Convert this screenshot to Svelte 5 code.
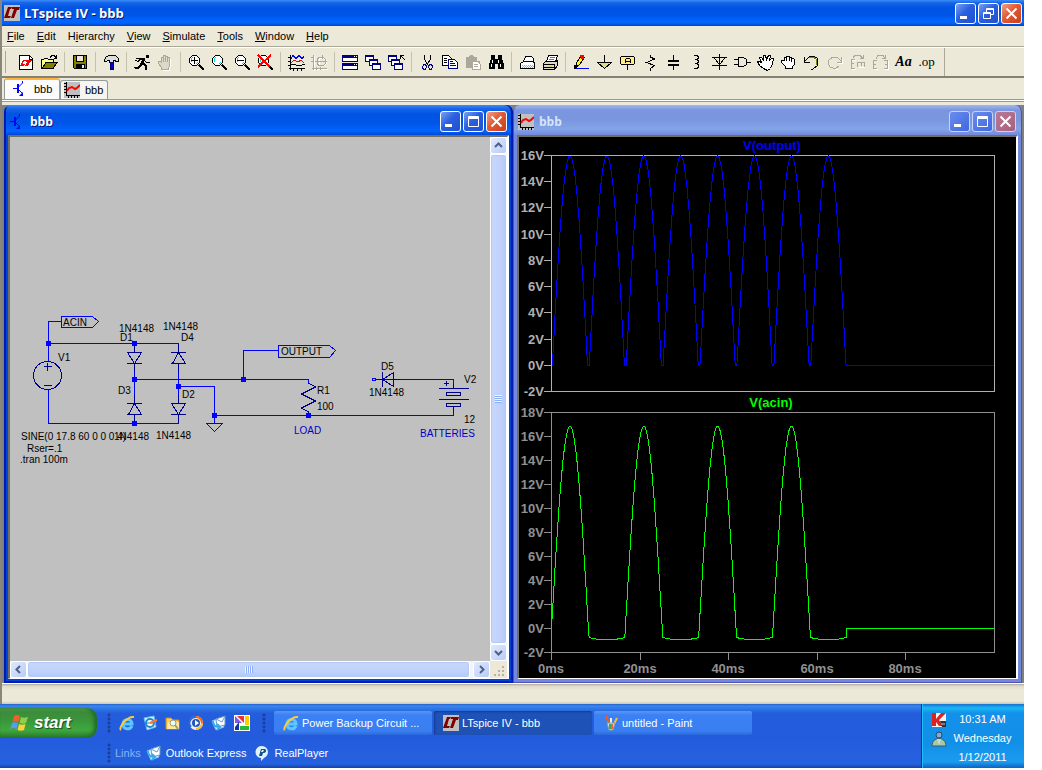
<script lang="ts">

    const menus = ['File', 'Edit', 'Hierarchy', 'View', 'Simulate', 'Tools', 'Window', 'Help'];
    // index of the underlined access key in each menu name
    const keys = [0, 0, 1, 0, 0, 0, 0, 0];

    const logo = '<path fill="#c0c0c0" d="M0 0h16v16H0z"/><path fill="#800000" d="M4 2h4L7 4H6l-2 7h3l-1 2H0zM8 2h8l-1 3h-2l-3 8H7l3-9H8z"/>';
    const transistor = '<path stroke="#00f" fill="none" d="M1 7.5h5M10.5 0v2l-4 4M6.5 8.5l4 4"/><path stroke="#00f" fill="none" stroke-width="2" d="M6 3v9"/><path fill="#00f" d="M11 11v4H7z"/>';
    const chart = '<path fill="#c0c0c0" d="M0 0h16v16H0z"/><path stroke="#000" fill="none" d="M2.5 0v14M2 13.5h14M0 1.5h2M0 4.5h2M0 7.5h2M0 10.5h2M4.5 14v2M7.5 14v2M10.5 14v2M13.5 14v2"/><path stroke="red" stroke-width="2" fill="none" d="M3 9l2-3 3-1 3 2 2-1 3-3"/>';
    const glass = '<path stroke="#000" fill="#fff" d="M4.5 1.5h4l3 3v4l-3 3h-4l-3-3v-4z"/><path stroke="#000" stroke-width="2" d="M11 11l5 5"/><path stroke="#0dd" d="M3 7.5V5L5 3M8 10l2-2"/>';
    const hand = 'M4.5 15.5v-2l-3-4v-2h2l1 1v-5h2v4-6h2v6-5h2v5-4h2v8l-1 4z';
    const win = (x: number, y: number) => `<path fill="#fff" stroke="#000080" d="M${x}.5 ${y}.5h8v6h-8z"/><path stroke="#000080" stroke-width="2" d="M${x} ${y + 1}h9"/>`;

    const icons: Record<string, string> = {
        'New schematic': '<path fill="#fff" stroke="#000" d="M1.5 1.5h10l3 3v11h-13z"/><path fill="none" stroke="#000" d="M11.5 2v3h3"/><path fill="red" d="M5 6h3L7 7H6l-1 3h2l-1 2H2zM8 6h6l-1 2h-1l-2 4H7l2-4H8z"/>',
        'Open': '<path fill="#ff8" stroke="#000" d="M.5 14.5v-9h2l1-1h3l1 1h5v3"/><path fill="#808000" stroke="#000" d="M1 14.5l4-6h11l-4 6z"/><path stroke="#000" fill="none" d="M9 3.5l2-2h2l2 2M15.5 1v3M12.5 4h3"/>',
        'Save': '<path fill="#808000" stroke="#000" d="M1.5 1.5h13v13h-12l-1-1z"/><path fill="#ece9d8" stroke="#000" d="M4.5 1.5h7v6h-7z"/><path fill="#000" d="M4 10h9v5H4z"/><path fill="#ece9d8" d="M10 11h2v3h-2z"/>',
        'Control panel': '<path fill="#ddd" stroke="#000" d="M1.5 5.5l2-3 3-1h6l3 3v3h-2l-2-1h-1v2h-4v-2h-2l-1 1h-2z"/><path fill="#00c" stroke="#000080" d="M7.5 8.5h3v7h-3z"/>',
        'Run': '<path fill="#000" d="M12 1h3v3h-3zM7 4h4v2l-2 4H6l2-4H6L4 8H2z"/><path stroke="#000" fill="none" d="M10 5.5l2 2.5h4M7 9.5l4 2v4M7 10l-3 3.5H0M9 9l3 2v5M1 14.5h3l4-4"/><path stroke="#000" d="M2 4.5h4M1 6.5h2"/>',
        'Halt': `<path fill="#fff" transform="translate(1 1)" d="${hand}"/><path fill="#ddd9c8" stroke="#aca899" d="${hand}"/>`,
        'Zoom in': glass + '<path stroke="#000" d="M3 6.5h7M6.5 3v7"/>',
        'Pan': glass,
        'Zoom out': glass + '<path stroke="#000" d="M3 6.5h7"/>',
        'Zoom full': glass + '<path stroke="red" stroke-width="2" d="M1 1l12 12M14 1L1 13"/>',
        'Autorange': '<path stroke="#000" fill="none" d="M2.5 1v15M1 14.5h16M0 3.5h2M0 7.5h2M0 11.5h2M5.5 14v3M9.5 14v3M13.5 14v3M3 10.5h4l2 1h4l2-1h2"/><path stroke="#00f" fill="none" d="M3 4.5l2-3 3 3 3-3 3 3 2-2"/><path stroke="red" fill="none" d="M3 8.5l3-2 4 1 3-1 3 2"/>',
        'Pick traces': '<path stroke="#fff" fill="none" d="M3.5 2v15M2 15.5h15M8 4.5h5l2 2v3l-2 2H8z"/><path stroke="#aca899" fill="none" d="M2.5 1v15M1 14.5h15M0 3.5h2M0 7.5h2M5.5 13v3M9.5 13v3M7.5 3.5h5l2 2v4l-2 2h-5l-1-2v-4zM11.5 1v4M4 7.5h12"/>',
        'Tile': '<path fill="#fff" stroke="#000080" d="M.5 1.5h15v6H.5zM.5 9.5h15v6H.5z"/><path stroke="#000080" stroke-width="3" d="M0 2.5h16M0 10.5h16"/><path stroke="#fff" d="M12 2.5h1M14 2.5h1M12 10.5h1M14 10.5h1"/>',
        'Cascade': win(0, 1) + win(4, 5) + win(7, 9),
        'Close windows': win(0, 1) + win(3, 5) + win(6, 9) + '<path stroke="#000" fill="none" d="M12.5 5V1.5H16M13 2l4 4"/>',
        'Cut': '<path stroke="#000" fill="none" d="M5.5 1v4l4 7M11.5 1v4l-4 7"/><path stroke="#008" fill="none" d="M4.5 10.5h2l1 2-1 3h-2l-1-2zM10.5 10.5h2l1 2-1 3h-2l-1-3z"/>',
        'Copy': '<path fill="#fff" stroke="#000" d="M.5 1.5h6l3 3v7h-9z"/><path fill="#fff" stroke="#008" d="M6.5 5.5h6l3 3v6h-9z"/><path stroke="#008" d="M8 9.5h5M8 11.5h6M8 7.5h3"/><path stroke="#000" d="M2 4.5h3M2 6.5h3M2 8.5h3"/>',
        'Paste': '<path fill="#aca899" d="M1 3h3l1-2h3l1 2h3v4h3v8H7v-1H1z"/><path fill="#fff" stroke="#aca899" d="M7.5 7.5h5l3 3v5h-8z"/><path stroke="#aca899" d="M9 10.5h4M9 12.5h4"/>',
        'Find': '<path fill="#000" d="M3 1h4v4h3V1h4v4l2 5v5h-6v-5H7v5H1v-5l2-5z"/><path stroke="#fff" d="M4.5 6v3M3.5 10v3M10.5 6v3M12.5 10v3"/>',
        'Print': '<path stroke="#000" fill="#fff" d="M4.5 7.5l2-5h6l2 2v3z"/><path stroke="#000" fill="#fff" d="M1.5 9.5l3-2h10l1 2v5h-14z"/><path stroke="#aaa" stroke-dasharray="1 1" d="M3 11.5h11M4 12.5h11M3 13.5h11"/>',
        'Print preview': '<path stroke="#000" fill="#fff" d="M4.5 7.5l2-6h9l-2 6z"/><path stroke="#777" d="M8 3.5h5M7 5.5h5"/><path stroke="#000" fill="#ddd9c8" d="M1.5 9.5l2-2h10l2-1v5l-3 4h-11z"/><path stroke="#000" d="M2 10.5h10M12.5 10v5M2 13.5h10"/><path stroke="#dd0" d="M7 12h3"/>',
        'Wire': '<path fill="#ff0" stroke="#000" d="M8.5 1.5l-5 7-1 5 4-3 5-7z"/><path fill="red" d="M7 1h4v4H8z"/><path fill="#000" d="M1 11h3v4H1z"/><path stroke="#00f" d="M3 14.5h13"/>',
        'Ground': '<path fill="#dd8" stroke="#000" d="M1.5 8.5h14l-7 6z"/><path stroke="#000" d="M8.5 1v8"/>',
        'Label net': '<path fill="#fe8" stroke="#000" d="M2.5 2.5h12l1 1v6l-1 1h-12l-1-1v-6zM8.5 11v5"/><path stroke="#000" fill="none" d="M6.5 9V5.5l1-1h3l1 1V9M7 7.5h4"/>',
        'Resistor': '<path stroke="#000" fill="none" d="M8.5 1v2l4 2-8 3.5 8 3-4 3v2"/>',
        'Capacitor': '<path stroke="#000" fill="none" d="M8.5 1v6M8.5 11v5"/><path stroke="#000" stroke-width="2" d="M3 7h11M3 11h11"/>',
        'Inductor': '<path stroke="#000" fill="none" d="M6 1.5h3l1 1v2l-1 1H7h2l1 1v2l-1 1H7h2l1 1v3l-1 1H6"/>',
        'Diode': '<path stroke="#000" fill="none" d="M8.5 0v16M1 3.5h15M3.5 4l5 7 5-7M1 11.5h15"/>',
        'Component': '<path stroke="#000" fill="none" d="M4.5 3.5h5l3 2v5l-3 2h-5zM0 5.5h4M0 10.5h4M13 8.5h4"/>',
        'Move': '<path stroke="#000" fill="#fff" d="M6.5 14.5l-4-3-2-4h2l2 1-2-5h2l2 3V1.5h2l1 4 2-4h2l-1 5 2-2h2l-1 5-2 5-3 2z"/>',
        'Drag': '<path stroke="#000" fill="#fff" d="M5.5 14.5v-2l-4-4v-2h3v-3h2v-1h3v1h2v1h2l1 1v5l-2 2v2zM6.5 4v3M9.5 4v3M11.5 5v3"/>',
        'Undo': '<path stroke="#000" fill="none" d="M1.5 3v5h5M2 7l4-4 4-1 4 2 1 4-1 4-4 3H8"/><path stroke="#880" fill="none" d="M6 4l4-1 3 2 1 3-1 3"/>',
        'Redo': '<path stroke="#fff" fill="none" d="M16.5 5v4h-5M9 15.5h3"/><path stroke="#aca899" fill="none" d="M15.5 3v5h-5M15 7l-4-4H7L3 6l-1 3 2 4 3 1h3l3-2"/>',
        'Rotate': '<path stroke="#fff" fill="none" d="M3 6.5h4M3 15.5h4M10 13.5h6"/><path stroke="#aca899" fill="none" d="M2.5 5v9M2 5.5h4M2 9.5h3M2 14.5h4M8 8.5h8M8.5 9v4M12.5 9v3M15.5 9v4M4 3.5l2-2h5l3 3M14.5 1v4M11 4.5h4"/>',
        'Mirror': '<path stroke="#fff" fill="none" d="M2 15.5h4M12 15.5h4M16.5 7v9"/><path stroke="#aca899" fill="none" d="M1.5 6v9M1 6.5h4M1 10.5h3M1 14.5h4M15.5 6v9M12 6.5h4M13 10.5h3M12 14.5h4M4 4.5l2-3h5l2 3M13.5 1v4M10 4.5h4"/>'
    };

    const groups = [
        ['New schematic', 'Open'],
        ['Save'],
        ['Control panel'],
        ['Run', 'Halt'],
        ['Zoom in', 'Pan', 'Zoom out', 'Zoom full'],
        ['Autorange', 'Pick traces'],
        ['Tile', 'Cascade', 'Close windows'],
        ['Cut', 'Copy', 'Paste', 'Find'],
        ['Print', 'Print preview'],
        ['Wire', 'Ground', 'Label net', 'Resistor', 'Capacitor', 'Inductor', 'Diode', 'Component', 'Move', 'Drag', 'Undo', 'Redo', 'Rotate', 'Mirror']
    ];

    const ie = '<path fill="none" stroke="#5cc8ff" stroke-width="3" d="M4 9h9c0-6-9-6-9 0s7 6 9 2"/><path fill="none" stroke="#fc3" stroke-width="2" d="M2 15C-1 13 8 1 15 2"/>';
    const envelope = '<path fill="#e8f4ff" stroke="#7bc4f4" d="M1 6l8-3 4 9-8 3z"/><path fill="#fff" stroke="#69c" d="M5 4l9-3v9l-8 2z"/><path fill="none" stroke="#69c" d="M5 4l6 3 3-6"/><path fill="none" stroke="#35a8f0" stroke-width="2" d="M2 6c0 4 2 6 6 6M6 9l3 3-3 3"/>';
    const bubble = '<path fill="#dff3ff" d="M8 1a6 6 0 0 1 6 6c0 3-2 5-4 6l-3 3v-3A6 6 0 0 1 8 1z"/><path fill="#158" d="M5 11l2-7h4c2 1 1 4-1 4H9l-1 3zM8 5l-1 2h2l1-2z"/>';
    const quick = [
        { name: 'Internet Explorer', art: ie },
        { name: 'Show Desktop', art: '<path fill="#d8f0ff" stroke="#5bc0f4" d="M2 3l10-2 2 11-9 3z"/><circle cx="8" cy="8" r="4" fill="#fff" stroke="#28c" stroke-width="2"/><path stroke="#28c" d="M5 8h6"/><path stroke="#f72" stroke-width="2" d="M8 8l7-3"/>' },
        { name: 'Explorer', art: '<path fill="#fc5" stroke="#c82" d="M1 3h5l2 2h6v9H1z"/><path fill="#ffe9a0" d="M3 7h11v7H2z"/><circle cx="8" cy="8" r="3" fill="#dff" stroke="#a96"/><path stroke="#a96" stroke-width="2" d="M10 10l3 4"/>' },
        { name: 'Media Player', art: '<circle cx="8" cy="8" r="7" fill="#e8eef8"/><path fill="none" stroke="#f60" stroke-width="2" d="M8 2a6 6 0 0 1 6 6"/><path fill="none" stroke="#36c" stroke-width="2" d="M3 12A6 6 0 0 1 8 2"/><path fill="none" stroke="#fb2" stroke-width="2" d="M8 14a6 6 0 0 0 6-6"/><circle cx="8" cy="8" r="4" fill="#25b"/><path fill="#fff" d="M7 5l4 3-4 3z"/>' },
        { name: 'Outlook Express', art: envelope },
        { name: 'Picture viewer', art: '<path fill="#fff" d="M0 0h16v16H0z"/><path fill="#85d" d="M1 1l7 7H1z"/><path fill="#e33" d="M3 1h7v7z"/><path fill="#fc0" d="M11 1h4v9h-4z"/><path fill="#2b3" d="M6 11h9v4H6z"/><path fill="#13a" d="M1 12l4-5v8H1z"/>' }
    ];
    const brushes = '<path stroke="#f52" stroke-width="2" d="M3 1l4 9"/><path stroke="#eee" stroke-width="2" d="M8 3v8"/><path stroke="#fb3" stroke-width="2" d="M14 3l-4 8"/><path stroke="#4a4" stroke-width="2" d="M4 6l3 6"/><path fill="#cde" stroke="#89a" d="M4 8h8l-2 7H6z"/><path stroke="#3a5" stroke-width="2" d="M7 9v5"/><path stroke="#e63" stroke-width="2" d="M9 9v5"/>';
    const tasks = [
        { title: 'Power Backup Circuit ...', art: ie },
        { title: 'LTspice IV - bbb', art: logo, active: true },
        { title: 'untitled - Paint', art: brushes }
    ];

    // plot geometry
    const x0 = 551;
    const x1 = 994;
    const perMs = (x1 - x0) / 100;
    const stop = 66.7;

    function trace(zero: number, perVolt: number, fn: (s: number) => number) {
        const pts: string[] = [];
        for (let t = 0; t <= stop; t += 0.1) {
            const s = Math.sin(2 * Math.PI * 60 * t / 1000);
            pts.push(`${(x0 + 0.5 + t * perMs).toFixed(1)},${(zero + 0.5 - fn(s) * perVolt).toFixed(1)}`);
        }
        pts.push(`${x0 + Math.round(stop * perMs)}.5,${zero}.5`, `${x1},${zero}.5`);
        return pts.join(' ');
    }

    const output = trace(365, 13.1, s => Math.max(0, 17.3 * Math.abs(s) - 1.3));
    const acin = trace(628, 12, s => s >= 0 ? 16.85 * s : Math.max(17.8 * s, 0.2 * s - 0.75));

    const upper = Array.from({ length: 10 }, (_, i) => ({ v: 16 - 2 * i, y: Math.round(155 + i * 26.22) }));
    const lower = Array.from({ length: 11 }, (_, i) => ({ v: 18 - 2 * i, y: 412 + i * 24 }));
    const times = [0, 20, 40, 60, 80];

    const nodes = [[48, 343], [134, 343], [134, 379], [178, 386], [134, 423], [214, 415], [243, 379], [308, 415]];
    const labels: [number, number, string][] = [
        [63, 326, 'ACIN'], [58, 361, 'V1'], [119, 332, '1N4148'], [120, 341, 'D1'], [163, 330, '1N4148'],
        [181, 341, 'D4'], [118, 394, 'D3'], [182, 398, 'D2'], [21, 440, 'SINE(0 17.8 60 0 0 0 4)'],
        [114, 440, '1N4148'], [156, 439, '1N4148'], [27, 452, 'Rser=.1'], [20, 463, '.tran 100m'],
        [281, 355, 'OUTPUT'], [317, 394, 'R1'], [317, 410, '100'], [381, 370, 'D5'], [369, 396, '1N4148'],
        [464, 383, 'V2'], [464, 423, '12']
    ];

</script>

{#snippet icon(art: string)}
    <svg class="icon" viewBox="0 0 16 16" width="16" height="16" aria-hidden="true">{@html art}</svg>
{/snippet}

{#snippet captions(restore: boolean)}
    <div class="captions">
        <button aria-label="Minimize"><svg width="19" height="19"><path fill="#fff" d="M4 12h7v3H4z" /></svg></button>
        <button aria-label="Maximize">
            <svg width="19" height="19">
                {#if restore}
                    <path fill="none" stroke="#fff" d="M7.5 8V4.5h7v6H12M7 5.5h8M4.5 8.5h7v6h-7zM4 9.5h8" />
                {:else}
                    <path fill="none" stroke="#fff" d="M4.5 4.5h10v10h-10zM4 5.5h11M4 6.5h11" />
                {/if}
            </svg>
        </button>
        <button class="close" aria-label="Close"><svg width="19" height="19"><path stroke="#fff" stroke-width="2" d="M4.5 4.5l10 10M14.5 4.5l-10 10" /></svg></button>
    </div>
{/snippet}

{#snippet diode(x: number, y: number, up: boolean)}
    <g class="part" transform="translate({x} {y})">
        {#if up}
            <path d="M.5 -8v8M.5 11v9M-7 .5h15M-7 11.5h15M.5 .5l-6 11M.5 .5l7 11" />
        {:else}
            <path d="M.5 -8v8M.5 11v9M-7 .5h15M-7 11.5h15M-6.5 .5l7 11 7-11" />
        {/if}
    </g>
{/snippet}

<div class="desktop">
    <div class="app">
        <header class="title">
            {@render icon(logo)}
            <h1>LTspice IV - bbb</h1>
            {@render captions(true)}
        </header>

        <nav class="menu">
            {#each menus as name, i}
                <button>{name.slice(0, keys[i])}<u>{name[keys[i]]}</u>{name.slice(keys[i] + 1)}</button>
            {/each}
        </nav>

        <div class="toolbar">
            <span class="grip"></span>
            {#each groups as group, g}
                {#if g}<i></i>{/if}
                {#each group as name}
                    <button aria-label={name}>
                        <svg viewBox="0 0 17 17" width="17" height="17" shape-rendering="crispEdges">{@html icons[name]}</svg>
                    </button>
                {/each}
            {/each}
            <button class="aa" aria-label="Text">Aa</button>
            <button class="op" aria-label="SPICE directive">.op</button>
            <i class="end"></i>
        </div>

        <div class="tabs">
            <button class="active">{@render icon(transistor)}bbb</button>
            <button>{@render icon(chart)}bbb</button>
        </div>

        <main>
            <section class="window">
                <header>
                    {@render icon(transistor)}
                    <h2>bbb</h2>
                    {@render captions(false)}
                </header>
                <div class="client schematic">
                    <div class="sheet">
                        <svg viewBox="10 137 480 524" width="480" height="524" shape-rendering="crispEdges">
                            <path class="wire" d="M61 321.5H48.5V361M48.5 343.5h130v8M48.5 390v33.5h130v-6M134.5 343v8M134.5 371v28M134.5 419v4M134.5 379.5h174v4M178.5 371v28M178.5 386.5h36v37M243.5 379v-28.5H279M214.5 415.5h239v-8M400 379.5h53.5v5" />
                            <path class="wire" d="M61.5 316.5h31l6 5-6 6h-31zM278.5 345.5h51l6 5-6 7h-51zM206.5 423.5h16l-8 8z" />
                            <g class="part">
                                <circle cx="47.5" cy="375.5" r="14" />
                                <path d="M44 366.5h8M47.5 363v8M44 385.5h8" />
                                <path d="M308.5 383l7 4-14 7 14 7-14 7 7 4v3" />
                                <path d="M376 379.5h24M382.5 372v15M393.5 372v15M382.5 379.5l11-7M382.5 379.5l11 7" />
                                <path d="M439 388.5h30M439 399.5h30M446.5 392.5h14v3h-14zM446.5 403.5h14v3h-14zM453.5 384v4M453.5 407v5M444 383.5h5M446.5 381v5" />
                            </g>
                            {@render diode(134, 352, false)}
                            {@render diode(178, 352, true)}
                            {@render diode(134, 403, true)}
                            {@render diode(178, 403, false)}
                            {#each nodes as [x, y]}
                                <rect class="node" x={x - 2} y={y - 2} width="5" height="5" />
                            {/each}
                            <rect class="wire" x="372.5" y="378.5" width="3" height="2" />
                            {#each labels as [x, y, text]}
                                <text {x} {y}>{text}</text>
                            {/each}
                            <text class="note" x="294" y="434">LOAD</text>
                            <text class="note" x="420" y="437">BATTERIES</text>
                        </svg>
                    </div>
                    <div class="scroll vertical">
                        <button aria-label="Scroll up"><svg width="15" height="15"><path d="M4 9l3.500-3.500L11 9" /></svg></button>
                        <div class="thumb"><span></span></div>
                        <button aria-label="Scroll down"><svg width="15" height="15"><path d="M4 6l3.500 3.500L11 6" /></svg></button>
                    </div>
                    <div class="scroll horizontal">
                        <button aria-label="Scroll left"><svg width="15" height="15"><path d="M9 4L5.500 7.500 9 11" /></svg></button>
                        <div class="thumb"><span></span></div>
                        <button aria-label="Scroll right"><svg width="15" height="15"><path d="M6 4l3.500 3.500L6 11" /></svg></button>
                    </div>
                    <svg width="17" height="17"><path stroke="#b8b4a2" stroke-width="2" stroke-dasharray="2 2" d="M4 14h10M8 10h6M12 6h2" /></svg>
                </div>
            </section>

            <section class="window inactive">
                <header>
                    {@render icon(chart)}
                    <h2>bbb</h2>
                    {@render captions(false)}
                </header>
                <div class="client">
                    <svg class="plot" viewBox="519 137 497 541" preserveAspectRatio="xMidYMin meet" shape-rendering="crispEdges">
                        <g class="axis light">
                            <rect x={x0 + 0.5} y="155.5" width={x1 - x0} height="236" />
                            {#each upper as { v, y }}
                                <path d="M544 {y}.5h7" />
                                <text x="544" y={y + 5} text-anchor="end">{v}V</text>
                            {/each}
                        </g>
                        <g class="axis">
                            <rect x={x0 + 0.5} y="412.5" width={x1 - x0} height="240" />
                            {#each lower as { v, y }}
                                <path d="M544 {y}.5h7" />
                                <text x="544" y={y + 5} text-anchor="end">{v}V</text>
                            {/each}
                            {#each times as t}
                                <path d="M{Math.round(x0 + t * perMs)}.5 653v7" />
                                <text x={Math.round(x0 + t * perMs)} y="673" text-anchor="middle">{t}ms</text>
                            {/each}
                        </g>
                        <polyline points={output} stroke="#0000ff" />
                        <polyline points={acin} stroke="#00ff00" />
                        <text x="772" y="150" text-anchor="middle" fill="#0000ff">V(output)</text>
                        <text x="771" y="407" text-anchor="middle" fill="#00ff00">V(acin)</text>
                    </svg>
                </div>
            </section>
        </main>

        <footer class="status"></footer>
    </div>

    <div class="taskbar">
        <div class="bands">
            <div class="band">
                <button class="start">
                    <svg width="20" height="18" viewBox="0 0 20 18">
                        <path fill="#f0612a" d="M4 2c2-1.500 4-1.500 6 0L8.500 8c-2-1-4-1-6 0z" />
                        <path fill="#8cd04a" d="M11 3c2 1 4 1 7 0l-2 6c-2 1-4 1-6.500 0z" />
                        <path fill="#5a9af0" d="M2 9c2-1 4-1 6 0l-1.500 6c-2-1.500-4-1.500-6 0z" />
                        <path fill="#fbd23c" d="M9 10c2 1 4 1 6.500 0l-1.500 6c-2.500 1-4.500 1-6.500 0z" />
                    </svg>
                    start
                </button>
                <span class="dots"></span>
                <div class="quick">
                    {#each quick as item}
                        <button aria-label={item.name}>{@render icon(item.art)}</button>
                    {/each}
                </div>
                <span class="dots"></span>
                <div class="tasks">
                    {#each tasks as task}
                        <button class:active={task.active}>{@render icon(task.art)}{task.title}</button>
                    {/each}
                </div>
            </div>
            <div class="band links">
                <span class="dots"></span>
                <span class="name">Links</span>
                <a href="#outlook">{@render icon(envelope)}Outlook Express</a>
                <a href="#realplayer">{@render icon(bubble)}RealPlayer</a>
            </div>
        </div>
        <div class="tray">
            <div class="trayicons">
                {@render icon('<path fill="#f4f4f4" d="M1 1h14v14H1z"/><path fill="#d22" d="M1 1h4v6l5-6h5L8 8l4 6H8L5 10v4H1z"/><path fill="#333" d="M9 9h6v6h-4z"/><path stroke="#ccc" d="M10 12h4"/>')}
                {@render icon('<circle cx="8" cy="4" r="3" fill="#79aede" stroke="#345"/><path fill="#a8c8a0" stroke="#456" d="M1 15c0-10 14-10 14 0z"/><path fill="#bde" d="M6 8h4l-2 6z"/>')}
            </div>
            <div class="clock">
                <span>10:31 AM</span>
                <span>Wednesday</span>
                <span>1/12/2011</span>
            </div>
        </div>
    </div>
</div>

<style>

    :global(body) {
        margin: 0;
        background: white;
    }

    .desktop {
        display: flex;
        flex-direction: column;
        box-sizing: border-box;
        min-height: calc(100vh - 2px);
        margin: 0 18px 2px 0;

        font: 11px/14px "Liberation Sans", Arial, sans-serif;
        color: black;
    }

    .desktop :is(button, a) {
        box-sizing: border-box;
        border: none;
        background: none;
        font: inherit;
        color: inherit;
        text-decoration: none;
    }

    button {
        padding: 0;
    }

    svg {
        display: block;
        flex: none;
    }

    h1, h2 {
        flex: 1;
        margin: 0;

        font: bold 12px/16px "Open Sans", sans-serif;
        color: white;
        text-shadow: 1px 1px #0a1883;
    }

    h1 {
        font-size: 13px;
    }

    .app {
        flex: 1;
        display: flex;
        flex-direction: column;
        border-left: 2px solid #8a877a;
        background: #ece9d8;
    }

    .title {
        display: flex;
        align-items: center;
        gap: 4px;
        height: 26px;
        box-sizing: border-box;
        padding: 0 2px;

        background: linear-gradient(#3a8cf8 0, #1563e8 3px, #0054e3 8px, #0055e8 15px, #0066ff 21px, #0064fa 23px, #0043c8 26px);
    }

    .captions {
        display: flex;
        gap: 2px;
    }

    .desktop .captions button {
        width: 21px;
        height: 21px;
        border: 1px solid white;
        border-radius: 3px;
        background: linear-gradient(135deg, #7ba0f0, #2a5fe0 45%, #2050d0);
    }

    .desktop .captions .close {
        background: linear-gradient(135deg, #f0a088, #e05a35 45%, #c8401a);
    }

    .menu {
        display: flex;
        gap: 12px;
        height: 20px;
        padding-left: 5px;
        border-bottom: 1px solid #aca899;
    }

    .toolbar {
        display: flex;
        align-items: center;
        height: 28px;
        border-top: 1px solid white;
        border-bottom: 2px solid #858275;
    }

    .grip {
        width: 1px;
        height: 22px;
        margin: 0 9px 0 2px;
        border-right: 1px solid #aca899;
    }

    .toolbar button {
        flex: none;
        width: 23px;
        height: 27px;
        padding: 0 3px;
    }

    .toolbar i {
        width: 1px;
        height: 20px;
        margin: 0 4px 0 3px;
        background: #c5c1af;
    }

    .toolbar .end {
        height: 28px;
        margin: 0 6px;
        background: #aca899;
    }

    .desktop .toolbar .aa {
        padding: 0;
        font: italic bold 14px "Liberation Serif", serif;
    }

    .desktop .toolbar .op {
        padding: 0;
        font: 13px "Liberation Serif", serif;
    }

    .tabs {
        display: flex;
        align-items: flex-end;
        height: 21px;
        padding-left: 2px;
        margin-bottom: 3px;
        border-bottom: 1px solid #919b9c;
        box-shadow: 0 1px white, 0 2px #919b9c;
    }

    .desktop .tabs button {
        display: flex;
        align-items: center;
        gap: 5px;
        width: 48px;
        height: 19px;
        padding: 0 0 0 3px;
        border: 1px solid #919b9c;
        border-bottom: none;
        border-radius: 3px 3px 0 0;
        background: #f6f5ef;
    }

    .desktop .tabs .active {
        gap: 6px;
        width: 56px;
        height: 21px;
        padding: 0 0 2px 7px;
        border-top: 2px solid #ffb43c;
        background: #fcfcfe;
    }

    main {
        flex: 1;
        display: flex;
        margin-top: 2px;
        padding: 0 2px;
        background: #808080;
    }

    .window {
        flex: 1 1 0;
        display: flex;
        flex-direction: column;
        box-sizing: border-box;
        min-width: 0;
        padding: 0 4px 4px;
        border-radius: 7px 7px 0 0;
        background: linear-gradient(#3a8cf8 0, #1563e8 4px, #0054e3 9px, #0055e8 18px, #0066ff 26px, #0046d5 30px);
        box-shadow: inset 2px -2px #0019b0, inset -2px 0 #0019b0;
    }

    .window header {
        display: flex;
        align-items: center;
        gap: 5px;
        height: 30px;
        box-sizing: border-box;
        padding: 3px 2px 0 1px;
    }

    .window.inactive {
        background: linear-gradient(#a0b8f0 0, #7a96df 5px, #7a96df 15px, #82a5e8 24px, #7288dd 30px);
        box-shadow: inset 1px -1px #5050b8, inset -1px 0 #5050b8;
    }

    .inactive h2 {
        color: #d8e4f8;
        text-shadow: none;
    }

    .desktop .inactive .captions button {
        border-color: #c8d4f4;
        background: linear-gradient(135deg, #6a8cec, #3f68e0);
    }

    .desktop .inactive .captions .close {
        background: linear-gradient(135deg, #b87a98, #a8607c);
    }

    .client {
        flex: 1;
        display: flex;
        min-height: 0;
        border: 2px solid #716f64;
        border-color: #716f64 white white #716f64;
        border-bottom-width: 1px;
        background: black;
    }

    .schematic {
        display: grid;
        grid-template: 1fr 17px / 1fr 17px;
        background: #ece9d8;
    }

    .sheet {
        min-width: 0;
        overflow: hidden;
        background: #c0c0c0;
    }

    .sheet text {
        font-size: 10px;
    }

    .sheet .note {
        fill: #0000c8;
    }

    .wire {
        fill: none;
        stroke: #0000ff;
    }

    .part {
        fill: none;
        stroke: #000090;
    }

    .node {
        fill: #0000ff;
    }

    .scroll {
        display: flex;
        background: #f3f4f8;
    }

    .vertical {
        flex-direction: column;
    }

    .desktop .scroll button {
        flex: none;
        width: 17px;
        height: 17px;
        border: 1px solid white;
        border-radius: 3px;
        background: linear-gradient(135deg, #e0e9ff, #b8ccf8);
    }

    .scroll path {
        fill: none;
        stroke: #4d6185;
        stroke-width: 2;
    }

    .thumb {
        flex: 1;
        display: flex;
        align-items: center;
        justify-content: center;
        border: 1px solid white;
        border-radius: 3px;
        background: linear-gradient(90deg, #c8d6fb, #c0d2fc 60%, #b4c8f8);
        box-shadow: inset 0 0 0 1px #b4c8f6;
    }

    .horizontal .thumb {
        margin-right: 3px;
        background: linear-gradient(#c8d6fb, #c0d2fc 60%, #b4c8f8);
    }

    .thumb span {
        width: 7px;
        height: 8px;
        background: repeating-linear-gradient(#eef4fe 0 1px, #8cb0f8 1px 2px);
    }

    .horizontal .thumb span {
        width: 8px;
        height: 7px;
        background: repeating-linear-gradient(90deg, #eef4fe 0 1px, #8cb0f8 1px 2px);
    }

    .plot {
        flex: 1;
        width: 100%;
        min-width: 0;
    }

    .plot text {
        font-size: 13px;
        font-weight: bold;
    }

    .plot polyline {
        fill: none;
    }

    .axis {
        fill: none;
        stroke: #909090;
    }

    .axis text {
        fill: #909090;
        stroke: none;
    }

    .light {
        stroke: #b0b0b0;
    }

    .light text {
        fill: #b0b0b0;
    }

    .status {
        height: 19px;
        border-top: 1px solid white;
        background: linear-gradient(#aca899 0, #dedbcb 2px, #ece9d8 6px, #ece9d8 17px, #d8d4c0 19px);
        border-bottom: 1px solid #d0ccb8;
    }

    .taskbar {
        display: flex;
        height: 64px;
        background: linear-gradient(#2560c8 0, #3a86ee 2px, #2f7be8 4px, #245edc 9px, #235bdc 32px, #2562df 60px, #1941a5 64px);
        color: white;
    }

    .bands {
        flex: 1;
        min-width: 0;
        padding-top: 4px;
    }

    .band {
        display: flex;
        align-items: center;
        height: 30px;
    }

    .desktop .start {
        display: flex;
        align-items: center;
        gap: 4px;
        width: 97px;
        height: 30px;
        padding-left: 10px;
        border-radius: 0 10px 10px 0;
        background: linear-gradient(#5aa85a 0, #3c8c3c 4px, #3a953a 12px, #3fa83f 22px, #2c7a2c 30px);
        box-shadow: inset -3px 0 4px #1f6a24;

        font: italic bold 17px/20px "Liberation Sans", Arial, sans-serif;
        text-shadow: 1px 1px 1px #1c4a1c;
    }

    .dots {
        width: 4px;
        height: 20px;
        margin: 0 8px 0 10px;
        background: radial-gradient(#1a3f9c 1px, transparent 2px) 0 0 / 4px 4px;
    }

    .quick {
        display: flex;
        gap: 7px;
        margin-right: 2px;
    }

    .tasks {
        flex: 1;
        display: flex;
        gap: 2px;
        min-width: 0;
    }

    .desktop .tasks button {
        display: flex;
        align-items: center;
        gap: 3px;
        flex: 0 1 158px;
        height: 24px;
        padding-left: 9px;
        border-radius: 2px;
        background: linear-gradient(#5a96f8 0, #3c81f3 4px, #3a7ff2 20px, #2a68dc 24px);
        white-space: nowrap;
    }

    .desktop .tasks .active {
        background: #1e52b7;
        box-shadow: inset 1px 1px 2px #143c8c;
    }

    .links {
        padding-left: 97px;
    }

    .name {
        margin-right: 5px;
        color: #8ab4f4;
    }

    .links .dots {
        margin-right: 4px;
    }

    .links a {
        display: flex;
        align-items: center;
        gap: 4px;
        margin-right: 8px;
    }

    .tray {
        display: flex;
        gap: 4px;
        width: 103px;
        box-sizing: border-box;
        padding: 6px 10px 0 9px;
        border-left: 1px solid #12357e;
        background: linear-gradient(#1a6fd0 0, #19b9f3 4px, #1490ea 9px, #1190e8 40px, #1a9cf0 58px, #1060c0 64px);
        box-shadow: inset 1px 0 #20c0f8;
    }

    .trayicons {
        display: flex;
        flex-direction: column;
        gap: 3px;
        padding-top: 2px;
    }

    .clock {
        flex: 1;
        display: flex;
        flex-direction: column;
        align-items: center;
        line-height: 19px;
    }

</style>
